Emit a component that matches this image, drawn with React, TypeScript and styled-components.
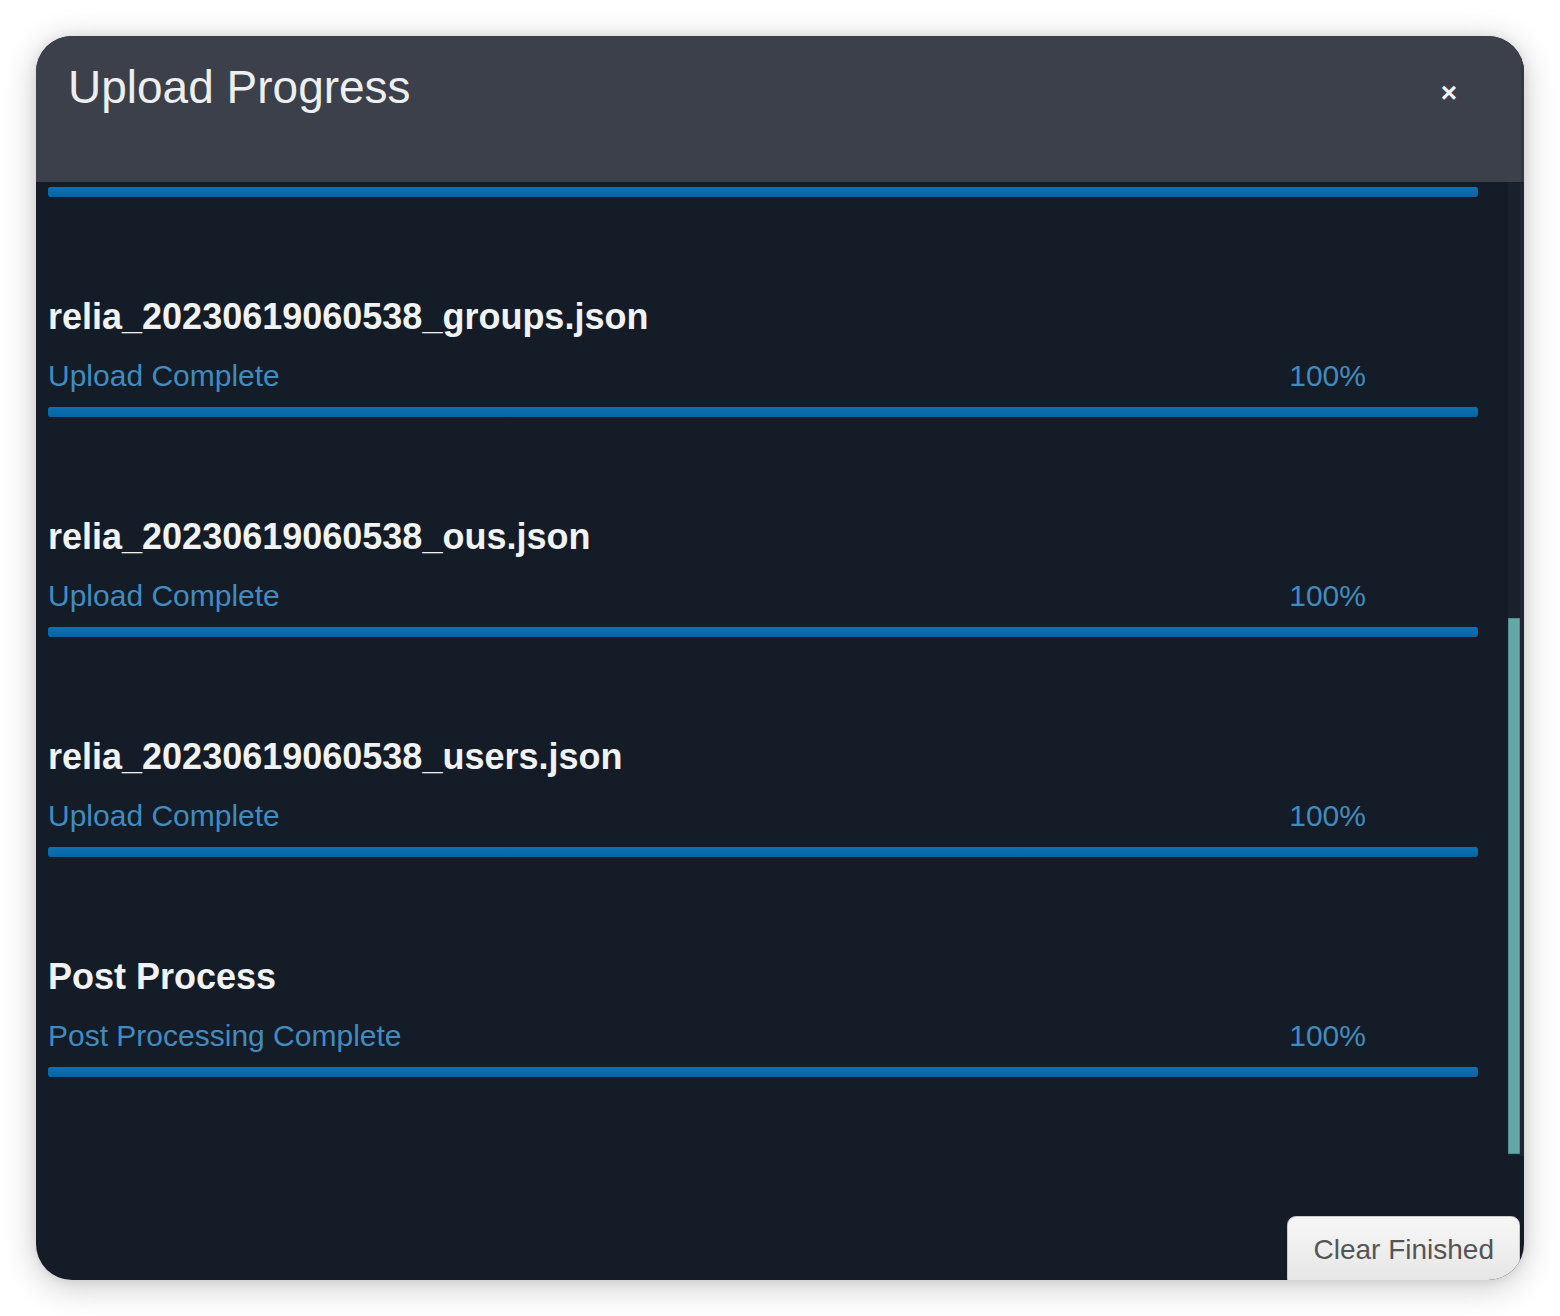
import React, { useLayoutEffect, useRef } from "react";
import styled, { createGlobalStyle } from "styled-components";

const GlobalStyle = createGlobalStyle`
  html, body { margin: 0; padding: 0; background: #ffffff; }
  body { font-family: "Liberation Sans", Arial, sans-serif; }
  * { box-sizing: border-box; }
`;

const Page = styled.div`
  padding: 36px;
  width: 1560px;
  height: 1316px;
`;

const Modal = styled.div`
  width: 1488px;
  height: 1244px;
  border-radius: 36px;
  overflow: hidden;
  background: #141c27;
  display: flex;
  flex-direction: column;
  box-shadow: 0 6px 34px rgba(0, 0, 0, 0.22), 0 0 12px rgba(0, 0, 0, 0.08);
`;

const Header = styled.div`
  height: 146px;
  flex: 0 0 146px;
  background: #3b404b;
  display: flex;
  justify-content: space-between;
  align-items: flex-start;
  padding: 25px 57px 0 32px;
  border-right: 3px solid #343843;
`;

const Title = styled.h1`
  margin: 0;
  font-family: "Liberation Sans", Arial, sans-serif;
  font-weight: 400;
  font-size: 46px;
  line-height: 52px;
  color: #eceef0;
`;

const Close = styled.button`
  margin-top: 17px;
  width: 30px;
  height: 30px;
  padding: 0;
  border: none;
  background: transparent;
  color: #f4f4f4;
  font-family: "Liberation Sans", Arial, sans-serif;
  font-weight: 700;
  font-size: 28px;
  line-height: 30px;
  text-align: center;
  cursor: pointer;
`;

const ScrollArea = styled.div`
  height: 974px;
  flex: 0 0 974px;
  display: flex;
`;

const Viewport = styled.div`
  flex: 1 1 auto;
  height: 100%;
  overflow: hidden;
  padding: 0 30px 79px 12px;
`;

const Rail = styled.div`
  flex: 0 0 16px;
  height: 100%;
  background: linear-gradient(to right, #19212c 12px, #1e2530 12px);
`;

const Thumb = styled.div`
  width: 12px;
  height: 536px;
  margin-top: 436px;
  background: #64a7a9;
  border: 1px solid #4f8d8f;
`;

const Item = styled.div`
  padding-top: 100px;
  display: flex;
  flex-direction: column;
`;

const FileName = styled.div`
  font-family: "Liberation Sans", Arial, sans-serif;
  font-weight: 700;
  font-size: 36px;
  line-height: 40px;
  color: #f1f2f3;
  white-space: nowrap;
`;

const StatusRow = styled.div`
  margin-top: 22px;
  display: flex;
  justify-content: space-between;
  font-family: "Liberation Sans", Arial, sans-serif;
  font-size: 30px;
  line-height: 34px;
  color: #428bbf;
`;

const Percent = styled.span`
  padding-right: 112px;
`;

const Track = styled.div`
  margin-top: 14px;
  height: 10px;
  border-radius: 2px;
  background: #0d2233;
  overflow: hidden;
`;

const Fill = styled.div`
  height: 100%;
  background: linear-gradient(#0c73b6, #0964a1);
  border-radius: 2px;
`;

const Footer = styled.div`
  flex: 1 1 auto;
  display: flex;
  justify-content: flex-end;
  align-items: flex-start;
  padding: 60px 4px 0 0;
`;

const ClearButton = styled.button`
  height: 72px;
  padding: 0 25px 4px 25px;
  border: 1px solid #c9c9c9;
  border-radius: 9px;
  background: linear-gradient(#f7f7f7, #e4e4e4);
  color: #555555;
  font-family: "Liberation Sans", Arial, sans-serif;
  font-size: 28px;
  line-height: 32px;
  box-shadow: 0 1px 2px rgba(0, 0, 0, 0.15);
  cursor: pointer;
`;

type Upload = { name: string; status: string; pct: number };

const uploads: Upload[] = [
  { name: "relia_20230619060538_gpos.json", status: "Upload Complete", pct: 100 },
  { name: "relia_20230619060538_groups.json", status: "Upload Complete", pct: 100 },
  { name: "relia_20230619060538_ous.json", status: "Upload Complete", pct: 100 },
  { name: "relia_20230619060538_users.json", status: "Upload Complete", pct: 100 },
  { name: "Post Process", status: "Post Processing Complete", pct: 100 },
];

export default function App() {
  const viewRef = useRef<HTMLDivElement>(null);

  useLayoutEffect(() => {
    const el = viewRef.current;
    if (el) el.scrollTop = el.scrollHeight;
  }, []);

  return (
    <>
      <GlobalStyle />
      <Page>
        <Modal>
          <Header>
            <Title>Upload Progress</Title>
            <Close aria-label="Close">×</Close>
          </Header>
          <ScrollArea>
            <Viewport ref={viewRef}>
              {uploads.map((u) => (
                <Item key={u.name}>
                  <FileName>{u.name}</FileName>
                  <StatusRow>
                    <span>{u.status}</span>
                    <Percent>{u.pct}%</Percent>
                  </StatusRow>
                  <Track>
                    <Fill style={{ width: `${u.pct}%` }} />
                  </Track>
                </Item>
              ))}
            </Viewport>
            <Rail>
              <Thumb />
            </Rail>
          </ScrollArea>
          <Footer>
            <ClearButton>Clear Finished</ClearButton>
          </Footer>
        </Modal>
      </Page>
    </>
  );
}
